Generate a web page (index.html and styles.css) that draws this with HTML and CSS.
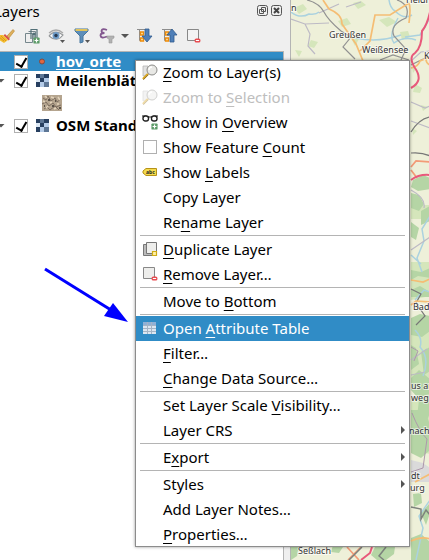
FILE: index.html
```html
<!DOCTYPE html>
<html lang="en">
<head>
<meta charset="utf-8">
<title>Layers</title>
<link rel="stylesheet" href="styles.css">
</head>
<body>
<svg class="defs" aria-hidden="true">
  <defs>
    <symbol id="magnifier" viewBox="0 0 16 16">
      <path d="M1 2h5l1 7-5 3H1z" fill="#e2e2e2" stroke="#b5b5b5" stroke-width=".8"/>
      <path d="M1 15l5-5" stroke="#d8a520" stroke-width="2.4"/>
      <path d="M1.200 15.800l5.200-5.200" stroke="#77603a" stroke-width=".7"/>
      <circle cx="10" cy="6" r="5" fill="#e8e8e5" stroke="#8b8b88"/>
      <path d="M7 6a3 3 0 0 1 3-3" fill="none" stroke="#fff" stroke-width="1.400"/>
    </symbol>
    <symbol id="plus" viewBox="0 0 8 8">
      <rect x=".5" y=".5" width="7" height="7" rx="1" fill="#5b9a67"/>
      <path d="M4 1.800v4.400M1.800 4h4.400" stroke="#fff" stroke-width="1.400"/>
    </symbol>
    <symbol id="minus" viewBox="0 0 8 6">
      <rect width="7" height="5" x=".5" y=".5" rx="2" fill="#e8474c"/>
      <path d="M2 3h4" stroke="#fff" stroke-width="1.300"/>
    </symbol>
    <symbol id="raster" viewBox="0 0 13 13">
      <path fill="#b4cbe8" d="M0 0h13v13H0z"/>
      <path fill="#273f60" d="M0 0h4v4H0zM8 0h5v4H8zM4 4h4v4H4zM0 8h4v5H0z"/>
      <path fill="#5d7695" d="M4 0h4v4H4zM8 8h5v5H8z"/>
      <path fill="#dce8f5" d="M0 4h4v4H0z"/>
    </symbol>
    <symbol id="tree" viewBox="0 0 16 16">
      <path d="M1 1.500h10M3.500 1v11.500M3.500 6.500h3M3.500 12.500h3" fill="none" stroke="#8d8d8d"/>
      <path d="M4.500 4h3v3h-3zM4.500 10h3v3h-3z" fill="#ffe0a0" stroke="#ee8c0a" stroke-width="1.300"/>
    </symbol>
  </defs>
</svg>

<main class="window">
  <section class="panel">
    <header class="titlebar">
      <h1>Layers</h1>
      <button class="tb" aria-label="Float"><svg viewBox="0 0 11 11"><rect x=".5" y=".5" width="10" height="10" rx="2" fill="none" stroke="#555"/><path d="M4.500 2.500h4v4h-4zM2.500 4.500h4v4h-4z" fill="#efefef" stroke="#555"/></svg></button>
      <button class="tb" aria-label="Close"><svg viewBox="0 0 11 11"><rect x=".5" y=".5" width="10" height="10" rx="2" fill="none" stroke="#555"/><path d="M3 3l5 5M8 3L3 8" stroke="#444" stroke-width="2"/></svg></button>
    </header>
    <div class="toolbar">
      <button aria-label="Layer styling"><svg viewBox="0 0 16 16"><path d="M8 8l6-6.500 1.500 1.500L10 10z" fill="#ddb05c" stroke="#b9832e" stroke-width=".6"/><path d="M6 6l5 5-1.500 1.500-5-5z" fill="#d9534a"/><path d="M1 7l3 0 5 5-4 3-5-3z" fill="#f4bd2e"/><path d="M0 9l5 4M2 8l5 5" stroke="#d68b18" stroke-width=".8"/></svg></button>
      <button aria-label="Add group"><svg viewBox="0 0 16 16"><path d="M1.500 5.500h7v9h-7zM4.500 3.500h7v9" fill="#eee" stroke="#75868c"/><path d="M7 11V1.500h6V10M10 11V5M8.500 6.500L10 5l1.500 1.500" fill="none" stroke="#527078" stroke-width="1.200"/><use href="#plus" x="9" y="9" width="7" height="7"/></svg></button>
      <button aria-label="Manage map themes"><svg viewBox="0 0 18 16"><path d="M1 8q6-7 14-1-6 8-14 1" fill="#fff" stroke="#96999b" stroke-width="1.200"/><path d="M1 5q7-6 14 0" fill="none" stroke="#aaa" stroke-width="1.300"/><circle cx="8" cy="7.500" r="3.500" fill="#6e9bc7"/><circle cx="8" cy="7.500" r="1.700" fill="#283a51"/><path d="M12 12h5l-2.500 3z" fill="#555"/></svg></button>
      <button aria-label="Filter legend"><svg viewBox="0 0 18 16"><path d="M2 1h13v2l-5 5v6l-3 1V8L2 3z" fill="#5d8eb9" stroke="#47779f"/><path d="M2.500 2h12" stroke="#e0c35c" stroke-width="2"/><path d="M12 12h5l-2.500 3z" fill="#555"/></svg></button>
      <button aria-label="Filter by expression"><svg viewBox="0 0 16 16"><path d="M8 2Q3 0 2.500 3q0 2 3 2-4 0-4 2.500Q2 11 8 8.500" fill="none" stroke="#83588f" stroke-width="1.800"/><path d="M8 8h7v2l-2 1v4h-3v-4l-2-1z" fill="#b2b2b2" stroke="#999" stroke-width=".6"/></svg></button>
      <button class="drop" aria-label="Expression options"><svg viewBox="0 0 8 16"><path d="M0 6h8L4 10z" fill="#555"/></svg></button>
      <button aria-label="Expand all"><svg viewBox="0 0 16 16"><use href="#tree" width="16" height="16"/><path d="M9 1h4v7h3l-5 6-5-6h3z" fill="#4f7fb8" stroke="#315b8d" stroke-width=".8"/></svg></button>
      <button aria-label="Collapse all"><svg viewBox="0 0 16 16"><use href="#tree" width="16" height="16"/><path d="M9 14h4V7h3l-5-6-5 6h3z" fill="#4f7fb8" stroke="#315b8d" stroke-width=".8"/></svg></button>
      <button aria-label="Remove layer"><svg viewBox="0 0 16 16"><path d="M1.500 1.500h11v11h-11z" fill="#f3f3f3" stroke="#888"/><use href="#minus" x="8" y="10" width="7" height="5"/></svg></button>
    </div>
    <div class="tree">
      <div class="row selected"><span class="twist"></span><input type="checkbox" checked aria-label="hov_orte visible"><svg class="ico" viewBox="0 0 13 13"><circle cx="6" cy="6.500" r="2.500" fill="#e0673f" stroke="#7d4a44"/></svg><span class="name">hov_orte</span></div>
      <div class="row"><span class="twist open"></span><input type="checkbox" checked aria-label="Meilenblätter visible"><svg class="ico"><use href="#raster"/></svg><span class="name">Meilenblätter</span></div>
      <div class="legend"><svg viewBox="0 0 20 16"><path fill="#b5a58f" d="M0 0h20v16H0z"/><path d="M1 3l3 2 2-4 3 5 4-3 2 4 4-3M0 9l4-2 3 4 4-3 3 4 5-2M2 14l3-2 3 3 5-4 4 4" fill="none" stroke="#7d6d5f"/><path d="M3 1l2 2M9 2l3 1M16 2l2 3M1 6l2 1M8 8l2-1M15 9l2 0M4 13l2-2M12 14l2-1" stroke="#e3d3bb" stroke-width="1.500"/><path d="M6 5h2M13 6h1M10 11h2M17 13h2M2 11h1" stroke="#3f3933" stroke-width="1.500"/></svg></div>
      <div class="row"><span class="twist open"></span><input type="checkbox" checked aria-label="OSM Standard visible"><svg class="ico"><use href="#raster"/></svg><span class="name">OSM Standard</span></div>
    </div>
  </section>

  <section class="map" aria-label="Map">
    <svg viewBox="0 0 139 560" preserveAspectRatio="xMinYMin slice">
      <path fill="#eef0d9" d="M0 0h400v560H0z"/>
      <g fill="#d5e6bb">
        <path d="M3 8l9-4 4 5-8 5zM47 21l9-3 4 6-9 3zM88 20l10-3 8 5-10 5zM62 3l8-2 5 4-8 4zM109 32l8-1 2 6-8 3zM20 40l7 2-4 6-6-2zM124 84l7 4-2 5-7-1zM130 105l7 2-5 4zM121 66l4 3-3 4zM4 50l7 1-3 6zM121 128l5 3-4 4zM60 38l8 1-4 7z"/>
        <path d="M120 205h19v14h-19zM120 262h19v34l-19 4zM120 326l19-4v62l-19 4zM120 398h19v56l-19-4z"/>
      </g>
      <g fill="#b5d5a5">
        <path d="M122 180l10-5 7 3v11l-12 2-7-4zM120 193l8 2 5 9-5 7-8-3zM130 211l9-5v15l-9 4zM120 222l8 6-3 12-5-3zM120 270l10 2 9-4v10l-12-2-7 4zM120 290l9-4 10 6v5h-19zM120 318l9-4 10 2v15l-8 6-11-2zM120 345l5 3 3 16-8 6zM130 352l9-5v24l-6 4zM120 378l8-8 11 9v15l-12 4-7-8zM128 400l11-6v19l-5 13-8-9zM120 410h14l5 15v25l-9 8-10-5zM122 494l8-1 1 10-8 4zM130 513l9-10v10l-4 12zM120 538l10-4 9 8v18h-19zM0 547l4-4 4 5-2 8-6 4zM42 545l10 2-4 6-8-1zM84 547h20l-1 7-8 6h-9l-6-5z"/>
      </g>
      <path d="M120 460l12 3 7 5v14h-19z" fill="#dadada"/>
      <g fill="none" stroke="#abd2df">
        <path d="M0 12q9 7 18 2 7 1 10-2M65 38q22 5 45-3M98 0q1 8 6 11 9 9 17 4M107 18q-10 18-4 25 10-7 22-3M139 18l-10 17-15 2M139 216l-8 13 2 12-7 17 5 14M124 330q8 8 5 17 10 11 3 29M120 255l10 9M124 300l9-10 6 2M139 500l-11 16 4 12-7 32" stroke-width="1.500"/>
      </g>
      <g fill="none" stroke="#bdbac5" stroke-width="1.200">
        <path d="M0 19l14 5 24-1M14 24l5 10-2 12 7 8M55 7l15-5M28 13l20-9M120 61l10-9 9-1M120 102l14 6 5-2M139 128l-19-7M120 190q15 8 13 18M120 250l19-13M120 360l16-11M120 375l14-3"/>
        <path d="M16 0q12 3 17 12 4 8 17 19l10 6-8 10 12 12M89 60l13-5 16 5M106 0q14 5 9 18-17 7-12 18l12 13-5 11M120 65l8-4 11-5" stroke="#919191"/>
        <path d="M120 132q8-13 19-15M120 153q11-1 19 3M120 289l10 5-5 9 9 13-9 9" stroke="#777"/>
      </g>
      <g fill="none" stroke="#f5bd74" stroke-width="1.700">
        <path d="M32 0l6 9q13 5 13 15l14 20 7 17M118 3L99 15 84 15l-5 26-10 10M118 3q2 5 0 20M139 65q-6-3-3-10M120 68q7-1 9-7l10-4M120 280l12 2 7-3M120 305l5-4 14 1M124 482l15-8M120 541q11-5 19-2"/>
        <path d="M120 167l5-6 14 1M120 170l6 8M56 547l12 13M70 547l-13 13" stroke="#f39b77"/>
      </g>
      <g fill="none" stroke="#e8597b" stroke-width="2">
        <path d="M139 12q-3 13-8 19 0 16-7 22-7 4 0 15 9 13-4 20M120 180q8-6 19-5M81 547l-2 6-9 7"/>
      </g>
      <path d="M120 507l10 2v10l5-9 4 5M71 547l-13 13M95 547l-7 9 5 4" fill="none" stroke="#7d827d" stroke-width="1.500"/>
      <path d="M121 413q7 18 15 26l-4 29-12 4M120 347l7 4-4 10" fill="none" stroke="#ae98ac"/>
      <g class="labels">
        <text x="0" y="11">n</text><text x="115" y="3">Heldrungen</text><text x="38" y="38">Greußen</text><text x="71" y="53">Weißensee</text><text x="133" y="59">Kindelbrück</text>
        <text x="122" y="310">Bad</text><text x="120" y="389">us am</text><text x="120" y="401">weg</text><text x="118" y="434">nach</text><text x="120" y="479">dt</text><text x="119" y="491">urg</text><text x="7" y="554">Seßlach</text>
      </g>
    </svg>
  </section>
</main>

<svg class="arrow" viewBox="0 0 86 58" aria-hidden="true"><path d="M1 2l66 41" stroke="#00f" stroke-width="3"/><path d="M84 55l-24-6 9-13z" fill="#00f"/></svg>

<div class="menu" role="menu">
  <button role="menuitem"><svg><use href="#magnifier"/></svg><span><u>Z</u>oom to Layer(s)</span></button>
  <button role="menuitem" disabled><svg><use href="#magnifier"/></svg><span>Zoom to <u>S</u>election</span></button>
  <button role="menuitem"><svg viewBox="0 0 16 16"><path d="M0 2h4l3 1h2l3-1h4" fill="none" stroke="#222"/><rect x="1" y="2" width="5.500" height="5" rx="2.300" fill="#fff" stroke="#222" stroke-width="1.400"/><rect x="9.500" y="2" width="5.500" height="5" rx="2.300" fill="#fff" stroke="#222" stroke-width="1.400"/><use href="#plus" x="9" y="9" width="7" height="7"/></svg><span>Show in <u>O</u>verview</span></button>
  <label><input type="checkbox"><span>Show Feature <u>C</u>ount</span></label>
  <button role="menuitem"><svg viewBox="0 0 16 16"><path d="M4 4.500h10.500v7H4L1 9V7z" fill="#f5dc4e" stroke="#b69218"/><text x="4" y="10" class="abc">abc</text></svg><span>Show <u>L</u>abels</span></button>
  <button role="menuitem"><span>Copy Layer</span></button>
  <button role="menuitem"><span>Re<u>n</u>ame Layer</span></button>
  <hr>
  <button role="menuitem"><svg viewBox="0 0 16 16"><path d="M1.500 3.500h10v11h-10z" fill="#bbb" stroke="#777"/><path d="M4.500 1.500h10v11h-10z" fill="#eeeeec" stroke="#777"/><path d="M10.500 10.500h4v4h-4z" fill="#fff0a8" stroke="#cfac16" stroke-width="1.200"/></svg><span><u>D</u>uplicate Layer</span></button>
  <button role="menuitem"><svg viewBox="0 0 16 16"><path d="M1.500 1.500h11v11h-11z" fill="#eeeeec" stroke="#888"/><use href="#minus" x="9" y="10" width="7" height="5"/></svg><span><u>R</u>emove Layer…</span></button>
  <hr>
  <button role="menuitem"><span>Move to <u>B</u>ottom</span></button>
  <hr>
  <button role="menuitem" class="active"><svg viewBox="0 0 16 16"><path d="M1 2h13v12H1z" fill="#dce6f1"/><path d="M1 2h13v3H1z" fill="#8fb0d6"/><path d="M1 5.500h13M1 8.500h13M1 11.500h13M5.500 2v12M9.500 2v12" stroke="#a5b4c5"/></svg><span>Open <u>A</u>ttribute Table</span></button>
  <button role="menuitem"><span><u>F</u>ilter…</span></button>
  <button role="menuitem"><span><u>C</u>hange Data Source…</span></button>
  <hr>
  <button role="menuitem"><span>Set Layer Scale <u>V</u>isibility…</span></button>
  <button role="menuitem" class="sub"><span>Layer CRS</span></button>
  <hr>
  <button role="menuitem" class="sub"><span>E<u>x</u>port</span></button>
  <hr>
  <button role="menuitem" class="sub"><span>Styles</span></button>
  <button role="menuitem"><span>Add Layer Notes…</span></button>
  <button role="menuitem"><span><u>P</u>roperties…</span></button>
</div>
</body>
</html>
```
FILE: styles.css
```css
* { box-sizing: border-box; }
body {
  margin: 0;
  overflow: hidden;
  background: #efefef;
  color: #000;
  font: 15px/20px "Noto Sans", sans-serif;
}
button {
  padding: 0;
  border: 0;
  background: none;
  color: inherit;
  font: inherit;
}
svg { display: block; }
.defs { position: absolute; width: 0; height: 0; }

.window { display: flex; height: 100vh; }
.panel {
  flex: 0 0 284px;
  display: flex;
  flex-direction: column;
}
.titlebar {
  display: flex;
  align-items: center;
  gap: 3px;
  height: 21px;
  padding-right: 2px;
}
.titlebar h1 {
  flex: 1;
  margin: 0 0 0 -6px;
  font-size: 15px;
  font-weight: 400;
}
.tb svg { width: 11px; height: 11px; }
.toolbar {
  display: flex;
  align-items: center;
  height: 30px;
  margin-left: -6px;
}
.toolbar button {
  flex: 0 0 25px;
  display: flex;
  justify-content: center;
}
.toolbar svg { height: 16px; width: 18px; }
.toolbar .drop { flex-basis: 12px; }
.toolbar .drop svg { width: 8px; }

.tree {
  flex: 1;
  border: solid #b4b4b4;
  border-width: 1px 1px 0 0;
  background: #fff;
}
.row {
  display: flex;
  align-items: center;
  height: 19px;
  font-weight: 700;
  line-height: 16px;
  white-space: nowrap;
}
.row .name { border-bottom: 1px solid transparent; }
.selected { background: #308cc6; color: #fff; }
.selected .name { border-color: #fff; }
.twist { width: 14px; }
.open::before {
  content: "";
  display: block;
  width: 8px;
  height: 4px;
  margin-left: -3px;
  background: #555;
  clip-path: polygon(0 0, 100% 0, 50% 100%);
}
input[type="checkbox"] {
  appearance: none;
  flex: none;
  width: 14px;
  height: 14px;
  margin: 0;
  border: 1px solid #b0b0b0;
  background: #fff;
}
input[type="checkbox"]:checked::before {
  content: "";
  display: block;
  width: 5px;
  height: 9px;
  margin: 0 auto;
  border: solid #000;
  border-width: 0 2px 2px 0;
  transform: rotate(30deg);
}
.ico { width: 13px; height: 13px; margin: 0 7px 0 8px; }
.legend { padding: 5px 0 5px 42px; }
.legend svg { width: 20px; height: 16px; }

.map {
  flex: 1;
  margin-left: 6px;
  border-left: 1px solid #b4b4b4;
  overflow: hidden;
}
.map svg { width: 100%; height: 100%; }
.labels {
  font-size: 9px;
  fill: #333;
  stroke: #fff;
  stroke-opacity: .6;
  stroke-width: 2px;
  paint-order: stroke;
}

.arrow {
  position: absolute;
  top: 267px;
  left: 44px;
  width: 86px;
  height: 58px;
}

.menu {
  position: absolute;
  top: 60px;
  left: 135px;
  width: 275px;
  background: #fff;
  outline: 1px solid #8c8c8c;
  outline-offset: -1px;
  box-shadow: 0 0 3px #0006;
}
.menu button,
.menu label {
  display: flex;
  align-items: center;
  width: 100%;
  height: 25px;
  padding: 0 5px 1px 28px;
  text-align: left;
  white-space: nowrap;
}
.menu svg { flex: none; width: 16px; height: 16px; margin: 0 5px 0 -21px; }
.menu input[type="checkbox"] { margin: 0 6px 0 -20px; }
.menu u { text-underline-offset: 3px; text-decoration-skip-ink: none; }
.menu button:disabled { color: #bebebe; }
.menu button:disabled svg { opacity: .4; }
.menu .active { background: #308cc6; color: #fff; }
.menu hr {
  height: 1px;
  margin: 0 5px 1px;
  border: 0;
  background: #b4b4b4;
}
.menu .sub::after {
  content: "";
  width: 4px;
  height: 8px;
  margin-left: auto;
  background: #555;
  clip-path: polygon(0 0, 100% 50%, 0 100%);
}
.abc { font: 700 5px "Noto Sans", sans-serif; fill: #222; }
```
